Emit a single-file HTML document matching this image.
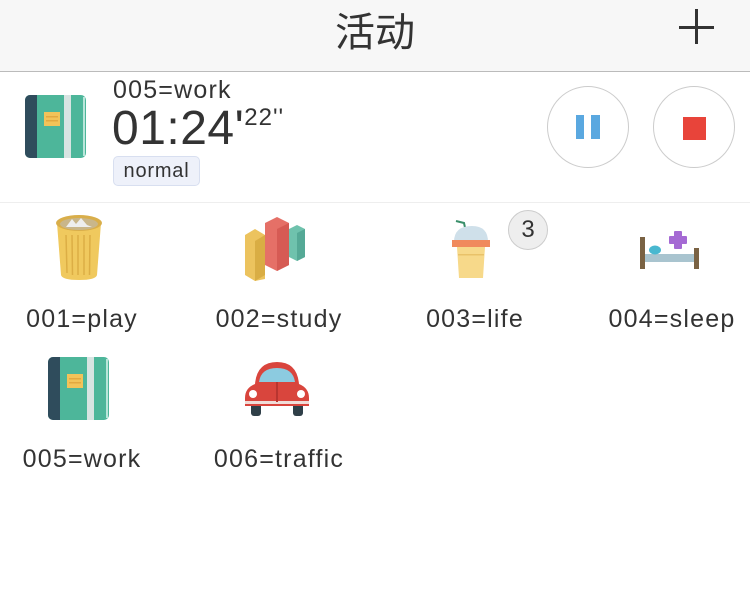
<!DOCTYPE html><html><head><meta charset="utf-8"><style>
*{margin:0;padding:0}body{width:750px;height:597px;background:#fff;position:relative;overflow:hidden;font-family:"Liberation Sans","Noto Sans CJK SC",sans-serif;color:#333}
.a{position:absolute}
.lbl{position:absolute;font-size:25px;letter-spacing:1.2px;color:#333;white-space:nowrap;transform:translateX(-50%)}
</style></head><body>
<div class="a" style="left:0;top:0;width:750px;height:71px;background:#f7f7f7;border-bottom:1px solid #bbb"></div>
<div class="a" style="left:0;top:0px;width:750px;text-align:center;font-size:40px;color:#333">活动</div>
<div class="a" style="left:679px;top:26px;width:35px;height:3px;background:#333"></div>
<div class="a" style="left:695px;top:9px;width:3px;height:35px;background:#333"></div>

<svg class="a" style="left:25px;top:95px" width="62" height="64" viewBox="0 0 62 64">
<rect x="0" y="0" width="61" height="63" rx="5" fill="#4db69a"/>
<path d="M5 0H12V63H5A5 5 0 0 1 0 58V5A5 5 0 0 1 5 0Z" fill="#2f4c5c"/>
<rect x="39" y="0" width="7" height="63" fill="#d8e4e2"/>
<rect x="58" y="2" width="2" height="59" fill="#b9e6da"/>
<rect x="19" y="17" width="16" height="14" fill="#f2c359"/>
<rect x="21" y="21" width="12" height="1.5" fill="#e2a840"/><rect x="21" y="25" width="12" height="1.5" fill="#e2a840"/>
</svg>
<div class="a" style="left:113px;top:76px;font-size:25px;letter-spacing:1.2px">005=work</div>
<div class="a" style="left:112px;top:103px;font-size:48px;line-height:52px;letter-spacing:0.5px">01:24'<span style="font-size:24px;vertical-align:top;line-height:30px;letter-spacing:1px">22''</span></div>
<div class="a" style="left:113px;top:156px;width:85px;height:28px;border:1px solid #d8dff0;border-radius:5px;background:#eef1fa;font-size:20px;letter-spacing:0.8px;line-height:28px;text-align:center">normal</div>
<div class="a" style="left:547px;top:86px;width:80px;height:80px;border:1px solid #ccc;border-radius:50%"></div>
<div class="a" style="left:576px;top:115px;width:8px;height:24px;background:#5aa8e0"></div>
<div class="a" style="left:591px;top:115px;width:9px;height:24px;background:#5aa8e0"></div>
<div class="a" style="left:653px;top:86px;width:80px;height:80px;border:1px solid #ccc;border-radius:50%"></div>
<div class="a" style="left:683px;top:117px;width:23px;height:23px;background:#e8443a"></div>
<div class="a" style="left:0;top:202px;width:750px;height:1px;background:#eee"></div>

<svg class="a" style="left:54px;top:215px" width="50" height="66" viewBox="0 0 50 66">
<path d="M3 8L7 60Q8 65 25 65Q42 65 43 60L47 8Z" fill="#f0c95e"/>
<ellipse cx="25" cy="8" rx="23" ry="8" fill="#d9ae4a"/><ellipse cx="25" cy="9" rx="19" ry="6" fill="#c9b68a"/>
<path d="M12 12L18 4L22 9L27 3L33 10L38 12Z" fill="#eee"/>
<g stroke="#dcae45" stroke-width="1.5"><line x1="12" y1="20" x2="13" y2="58"/><line x1="18" y1="20" x2="18.5" y2="60"/><line x1="24" y1="20" x2="24" y2="60"/><line x1="30" y1="20" x2="30" y2="60"/><line x1="36" y1="20" x2="35.5" y2="60"/></g>
</svg>
<svg class="a" style="left:243px;top:215px" width="68" height="66" viewBox="0 0 68 66">
<path d="M2 20L12 14L22 20V64L12 66L2 60Z" fill="#ecc35e"/><path d="M12 26L22 20V60L12 66Z" fill="#d9ad44"/>
<path d="M22 8L34 2L46 8V50L34 56L22 50Z" fill="#e57067"/><path d="M34 14L46 8V50L34 56Z" fill="#d65b54"/>
<path d="M46 14L54 10L62 14V42L54 46L46 42Z" fill="#6fc2ad"/><path d="M54 18L62 14V42L54 46Z" fill="#55a996"/>
</svg>
<svg class="a" style="left:448px;top:220px" width="44" height="60" viewBox="0 0 44 60">
<path d="M8 1L16 3L18 12" stroke="#3a8f6a" stroke-width="2" fill="none"/>
<path d="M6 22Q6 6 24 6Q40 6 40 22Z" fill="#cfe0ea"/>
<rect x="4" y="20" width="38" height="7" fill="#f08a5d"/>
<path d="M9 27H37L35 58H11Z" fill="#f7d98a"/><rect x="10" y="34" width="26" height="1.5" fill="#e9c269"/>
</svg>
<div class="a" style="left:508px;top:210px;width:38px;height:38px;border:1px solid #ccc;border-radius:50%;background:#eee;font-size:24px;line-height:38px;text-align:center">3</div>
<svg class="a" style="left:640px;top:230px" width="60" height="40" viewBox="0 0 60 40">
<rect x="0" y="7" width="5" height="32" fill="#7a6243"/><rect x="54" y="18" width="5" height="21" fill="#7a6243"/>
<rect x="5" y="24" width="49" height="8" fill="#a9c4cf"/>
<ellipse cx="15" cy="20" rx="6" ry="4.5" fill="#49b8d0"/>
<path d="M35 2h6v5h5v6h-5v5h-6v-5h-5v-6h5z" fill="#a56ad4" stroke="#a56ad4" stroke-linejoin="round" stroke-width="2"/>
</svg>
<svg class="a" style="left:48px;top:357px" width="62" height="64" viewBox="0 0 62 64">
<rect x="0" y="0" width="61" height="63" rx="5" fill="#4db69a"/>
<path d="M5 0H12V63H5A5 5 0 0 1 0 58V5A5 5 0 0 1 5 0Z" fill="#2f4c5c"/>
<rect x="39" y="0" width="7" height="63" fill="#d8e4e2"/>
<rect x="58" y="2" width="2" height="59" fill="#b9e6da"/>
<rect x="19" y="17" width="16" height="14" fill="#f2c359"/>
<rect x="21" y="21" width="12" height="1.5" fill="#e2a840"/><rect x="21" y="25" width="12" height="1.5" fill="#e2a840"/>
</svg>
<svg class="a" style="left:243px;top:360px" width="68" height="57" viewBox="0 0 68 57">
<rect x="8" y="42" width="10" height="14" rx="3" fill="#2f3f48"/><rect x="50" y="42" width="10" height="14" rx="3" fill="#2f3f48"/>
<path d="M12 24Q14 2 34 2Q54 2 56 24Q66 28 66 38V46H2V38Q2 28 12 24Z" fill="#d9453d"/>
<path d="M16 22Q18 8 34 8Q50 8 52 22Z" fill="#8ccbe0"/>
<circle cx="10" cy="34" r="4" fill="#fff"/><circle cx="58" cy="34" r="4" fill="#fff"/>
<rect x="2" y="41" width="64" height="3" fill="#f0dcd8"/>
<rect x="33" y="22" width="2" height="20" fill="#b83530"/>
</svg>

<div class="lbl" style="left:82px;top:305px">001=play</div>
<div class="lbl" style="left:279px;top:305px">002=study</div>
<div class="lbl" style="left:475px;top:305px">003=life</div>
<div class="lbl" style="left:672px;top:305px">004=sleep</div>
<div class="lbl" style="left:82px;top:445px">005=work</div>
<div class="lbl" style="left:279px;top:445px">006=traffic</div>
</body></html>
